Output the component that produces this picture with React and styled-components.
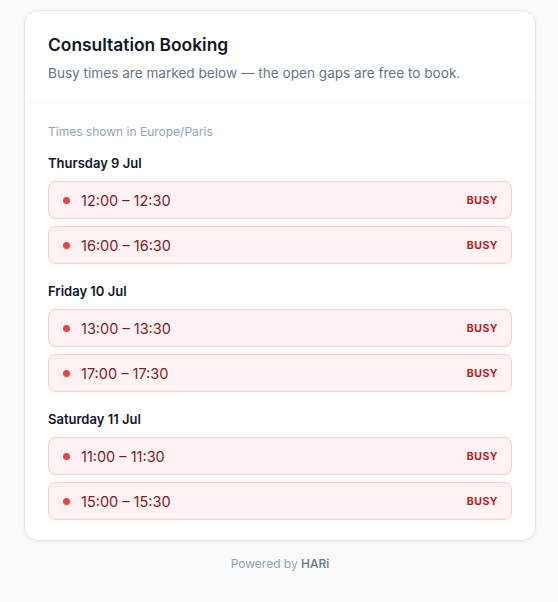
import styled, { createGlobalStyle } from "styled-components"

const GlobalStyle = createGlobalStyle`
    body {
        margin: 0;
        background: #f8fafc;
        font-family: Inter, "Noto Sans", sans-serif;
        -webkit-font-smoothing: antialiased;
    }
`

const days = [
    { label: "Thursday 9 Jul", slots: ["12:00 – 12:30", "16:00 – 16:30"] },
    { label: "Friday 10 Jul", slots: ["13:00 – 13:30", "17:00 – 17:30"] },
    { label: "Saturday 11 Jul", slots: ["11:00 – 11:30", "15:00 – 15:30"] },
]

const App = () => {
    return (
        <Page>
            <GlobalStyle />
            <Card>
                <Header>
                    <Title>Consultation Booking</Title>
                    <Subtitle>Busy times are marked below — the open gaps are free to book.</Subtitle>
                </Header>

                <Body>
                    <Zone>Times shown in Europe/Paris</Zone>
                    {days.map((day) => (
                        <Day key={day.label}>
                            <DayLabel>{day.label}</DayLabel>
                            <Slots>
                                {day.slots.map((slot) => (
                                    <Slot key={slot}>
                                        <Dot />
                                        <Time>{slot}</Time>
                                        <Badge>BUSY</Badge>
                                    </Slot>
                                ))}
                            </Slots>
                        </Day>
                    ))}
                </Body>
            </Card>

            <Footer>
                Powered by <Brand>HARi</Brand>
            </Footer>
        </Page>
    )
}

export default App

const Page = styled.div`
    width: 512px;
    margin-left: 24px;
    padding: 10px 0 24px;
    display: flex;
    flex-direction: column;
`

const Card = styled.div`
    box-sizing: border-box;
    background: #ffffff;
    border: 1px solid #e5e7eb;
    border-radius: 14px;
    box-shadow: 0 1px 3px rgba(15, 23, 42, 0.06);
`

const Header = styled.div`
    padding: 21px 23px 19px;
    border-bottom: 1px solid #f1f5f9;
`

const Title = styled.h1`
    margin: 0;
    font-size: 17.4px;
    line-height: 25px;
    font-weight: 600;
    color: #0f172a;
`

const Subtitle = styled.p`
    margin: 6px 0 0;
    font-size: 13.6px;
    line-height: 20px;
    color: #64748b;
`

const Body = styled.div`
    padding: 21px 23px 20px;
`

const Zone = styled.div`
    font-size: 12px;
    line-height: 16px;
    color: #94a3b8;
    margin-bottom: 14px;
`

const Day = styled.div`
    & + & {
        margin-top: 18px;
    }
`

const DayLabel = styled.div`
    font-size: 13px;
    line-height: 18px;
    font-weight: 600;
    color: #0f172a;
    margin-bottom: 9px;
`

const Slots = styled.div`
    display: flex;
    flex-direction: column;
    gap: 7px;
`

const Slot = styled.div`
    height: 38px;
    box-sizing: border-box;
    display: flex;
    align-items: center;
    padding: 0 13px 0 14px;
    background: #fef2f2;
    border: 1px solid #fecaca;
    border-radius: 8px;
`

const Dot = styled.span`
    width: 7px;
    height: 7px;
    border-radius: 50%;
    background: #ef4444;
    flex-shrink: 0;
`

const Time = styled.span`
    flex: 1;
    margin-left: 11px;
    font-size: 14.5px;
    color: #7f1d1d;
`

const Badge = styled.span`
    font-size: 10.5px;
    font-weight: 700;
    letter-spacing: 0.5px;
    color: #b91c1c;
`

const Footer = styled.div`
    margin-top: 15px;
    text-align: center;
    font-size: 12px;
    line-height: 16px;
    color: #94a3b8;
`

const Brand = styled.span`
    color: #64748b;
    font-weight: 500;
`
